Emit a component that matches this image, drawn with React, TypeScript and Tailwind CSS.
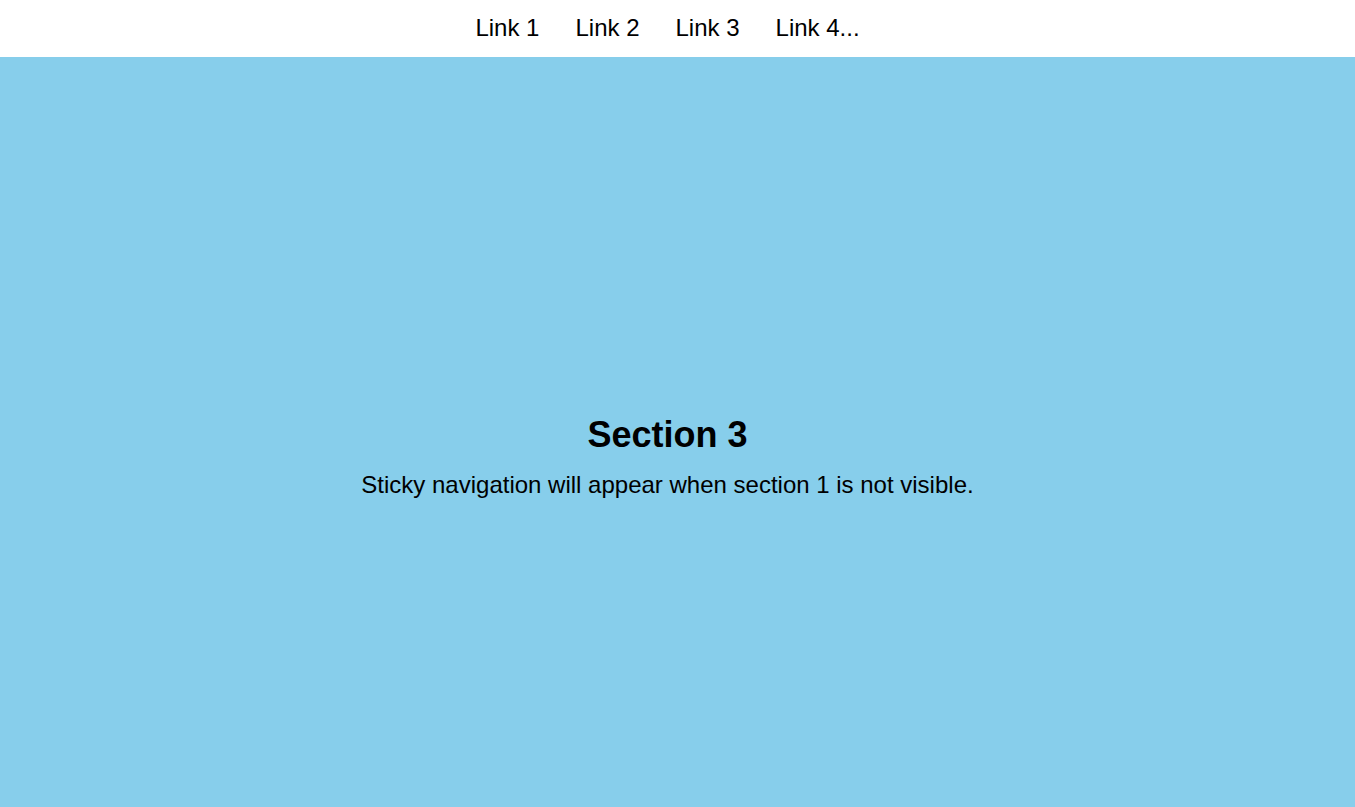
import React from "react";

const links = ["Link 1", "Link 2", "Link 3", "Link 4..."];

const App = () => {
  return (
    <div className="min-h-screen bg-white text-black font-['Liberation_Sans',Arial,sans-serif]">
      <nav className="h-[57px] bg-white flex items-center justify-center pr-5">
        <ul className="flex gap-9">
          {links.map((link) => (
            <li key={link}>
              <a href="#" className="text-[24px] leading-[28px] text-black">
                {link}
              </a>
            </li>
          ))}
        </ul>
      </nav>
      <section className="h-[750px] bg-[#87ceeb] flex flex-col items-center justify-center pt-12 pr-5">
        <h2 className="text-[36px] leading-[41px] font-bold">Section 3</h2>
        <p className="mt-4 text-[24px] leading-[28px]">
          Sticky navigation will appear when section 1 is not visible.
        </p>
      </section>
    </div>
  );
};

export default App;
